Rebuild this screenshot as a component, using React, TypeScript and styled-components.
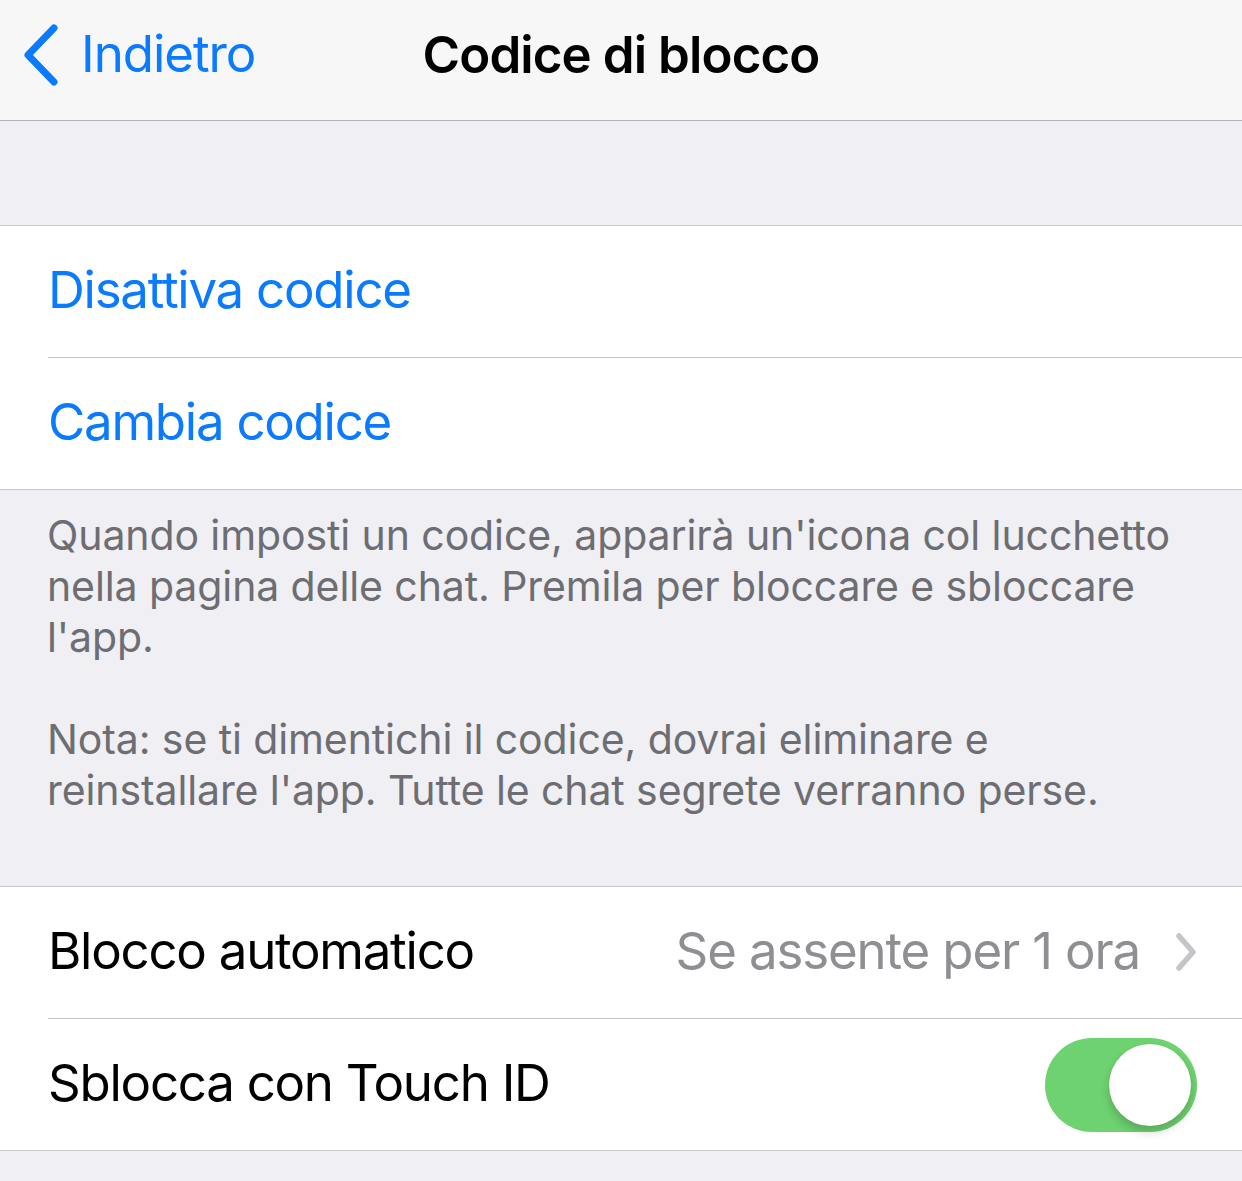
import styled, { createGlobalStyle } from "styled-components";

const GlobalStyle = createGlobalStyle`
  body {
    margin: 0;
    background: #efeff4;
    font-family: Inter, "Noto Sans", sans-serif;
    -webkit-font-smoothing: antialiased;
  }
`;

const BackIcon = () => (
  <svg width="40" height="64" viewBox="0 0 40 64">
    <path
      d="M33 5 L7 32 L33 59"
      fill="none"
      stroke="#0a7aff"
      strokeWidth="7"
      strokeLinecap="round"
      strokeLinejoin="round"
    />
  </svg>
);

const Disclosure = () => (
  <svg width="26" height="40" viewBox="0 0 26 40">
    <path
      d="M8 3 L22 19 L8 35"
      fill="none"
      stroke="#c4c4c9"
      strokeWidth="5.5"
      strokeLinecap="round"
      strokeLinejoin="round"
    />
  </svg>
);

const App = () => {
  return (
    <>
      <GlobalStyle />
      <NavBar>
        <Back>
          <BackIcon />
          <BackLabel>Indietro</BackLabel>
        </Back>
        <Title>Codice di blocco</Title>
        <div />
      </NavBar>
      <Spacer />
      <Group>
        <Row>
          <RowInner>
            <Label $tint>Disattiva codice</Label>
          </RowInner>
        </Row>
        <Row>
          <RowInner>
            <Label $tint>Cambia codice</Label>
          </RowInner>
        </Row>
      </Group>
      <Footer>
        <p>
          Quando imposti un codice, apparirà un'icona col lucchetto nella pagina
          delle chat. Premila per bloccare e sbloccare l'app.
        </p>
        <p>
          Nota: se ti dimentichi il codice, dovrai eliminare e reinstallare
          l'app. Tutte le chat segrete verranno perse.
        </p>
      </Footer>
      <Group>
        <Row>
          <RowInner>
            <Label>Blocco automatico</Label>
            <Detail>
              <Value>Se assente per 1 ora</Value>
              <Disclosure />
            </Detail>
          </RowInner>
        </Row>
        <Row>
          <RowInner>
            <Label>Sblocca con Touch ID</Label>
            <Switch $on>
              <Knob />
            </Switch>
          </RowInner>
        </Row>
      </Group>
      <Bottom />
    </>
  );
};

const NavBar = styled.div`
  height: 120px;
  background: #f7f7f7;
  border-bottom: 1px solid #b4b4b4;
  display: grid;
  grid-template-columns: 1fr auto 1fr;
  align-items: center;
`;

const Back = styled.div`
  display: flex;
  align-items: center;
  gap: 20px;
  padding-left: 21px;
  margin-top: -11px;
  color: #0a7aff;
`;

const BackLabel = styled.span`
  font-size: 51px;
  letter-spacing: -1.05px;
  margin-top: -2px;
`;

const Title = styled.h1`
  margin: 0 0 12px;
  font-size: 51px;
  font-weight: 600;
  color: #000;
  letter-spacing: -0.9px;
`;

const Spacer = styled.div`
  height: 104px;
`;

const Group = styled.div`
  background: #fff;
  border-top: 1px solid #c8c7cc;
  border-bottom: 1px solid #c8c7cc;
`;

const Row = styled.div`
  padding-left: 48px;
  &:not(:last-child) > div {
    border-bottom: 1px solid #c8c7cc;
  }
`;

const RowInner = styled.div`
  height: 131px;
  display: flex;
  align-items: center;
  justify-content: space-between;
  padding-right: 45px;
`;

const Label = styled.span<{ $tint?: boolean }>`
  font-size: 51px;
  letter-spacing: -1.25px;
  margin-top: -4px;
  color: ${(p) => (p.$tint ? "#0a7aff" : "#000")};
`;

const Detail = styled.div`
  display: flex;
  align-items: center;
  gap: 31px;
`;

const Value = styled.span`
  font-size: 51px;
  letter-spacing: -1.15px;
  margin-top: -4px;
  color: #8e8e93;
`;

const Switch = styled.div<{ $on?: boolean }>`
  width: 152px;
  height: 94px;
  border-radius: 47px;
  background: ${(p) => (p.$on ? "#6dd26f" : "#e5e5ea")};
  display: flex;
  align-items: center;
  justify-content: ${(p) => (p.$on ? "flex-end" : "flex-start")};
  padding: 0 6px;
  box-sizing: border-box;
`;

const Knob = styled.div`
  width: 82px;
  height: 82px;
  border-radius: 50%;
  background: #fff;
  box-shadow: 0 6px 10px rgba(0, 0, 0, 0.18), 0 0 1px rgba(0, 0, 0, 0.2);
`;

const Footer = styled.div`
  padding: 20px 47px 70px;
  color: #6d6d72;
  font-size: 41px;
  line-height: 51px;
  letter-spacing: -0.1px;
  p {
    margin: 0 0 51px;
  }
  p:last-child {
    margin-bottom: 0;
  }
`;

const Bottom = styled.div`
  height: 40px;
`;

export default App;
